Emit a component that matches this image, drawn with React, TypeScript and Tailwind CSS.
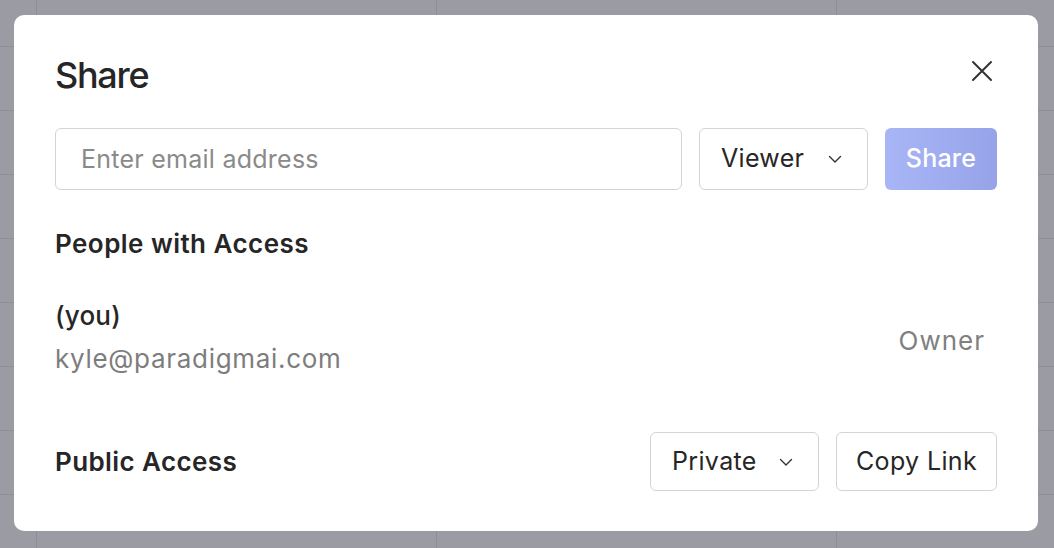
import { useState } from "react";

const ChevronDown = () => (
  <svg width="16" height="16" viewBox="0 0 16 16" fill="none" className="shrink-0">
    <path d="M2.5 5.5L8 11L13.5 5.5" stroke="#333" strokeWidth="1.4" strokeLinecap="round" strokeLinejoin="round" />
  </svg>
);

const CloseIcon = () => (
  <svg width="22" height="22" viewBox="0 0 22 22" fill="none">
    <path d="M2 2L20 20M20 2L2 20" stroke="#333" strokeWidth="2" strokeLinecap="round" />
  </svg>
);

// spreadsheet behind the dialog
const SheetBackground = () => {
  const rows = Array.from({ length: 9 });
  const cols = Array.from({ length: 4 });
  return (
    <div className="absolute inset-0 overflow-hidden bg-[#9b9ca3]">
      <div className="grid grid-cols-[37px_400px_400px_400px] grid-rows-[47px_repeat(8,64px)]">
        {rows.map((_, r) =>
          cols.map((_, c) => (
            <div key={`${r}-${c}`} className="border-r border-b border-[#8d8e96]" />
          ))
        )}
      </div>
    </div>
  );
};

const App = () => {
  const [email, setEmail] = useState("");

  return (
    <div
      className="relative w-[1054px] h-[548px] overflow-hidden"
      style={{ fontFamily: "Inter, 'Noto Sans', sans-serif" }}
    >
      <SheetBackground />

      {/* Dialog */}
      <div className="absolute left-[14px] top-[15px] w-[1024px] h-[516px] bg-white rounded-[10px] px-[41px] pt-[40px] text-[#262626]">
        <div className="flex items-start justify-between">
          <h1 className="text-[36px] leading-[40px] font-medium tracking-[-1.3px]">Share</h1>
          <button className="mt-[5px] mr-[4px]">
            <CloseIcon />
          </button>
        </div>

        {/* invite row */}
        <div className="flex gap-[17px] mt-[33px]">
          <input
            value={email}
            onChange={(e) => setEmail(e.target.value)}
            placeholder="Enter email address"
            className="flex-1 h-[62px] border border-[#d4d4d4] rounded-[6px] px-[25px] text-[25px] tracking-[0.25px] placeholder:text-[#8a8a8a] outline-none"
          />
          <button className="w-[169px] h-[62px] border border-[#d4d4d4] rounded-[6px] pl-[21px] pr-[24px] flex items-center justify-between text-[25px] tracking-[0.3px]">
            <span>Viewer</span>
            <ChevronDown />
          </button>
          <button className="w-[112px] h-[62px] rounded-[6px] bg-gradient-to-r from-[#a8b6f7] to-[#97a3e8] text-white text-[25px] font-medium tracking-[0.2px]">
            Share
          </button>
        </div>

        {/* people */}
        <h2 className="mt-[36px] text-[26px] leading-[36px] font-semibold tracking-[0.45px]">People with Access</h2>
        <div className="mt-[36px] flex items-center justify-between">
          <div className="flex flex-col gap-[7px]">
            <span className="text-[26px] leading-[36px] font-medium tracking-[0.2px]">(you)</span>
            <span className="text-[26px] leading-[36px] text-[#7d7d7d] tracking-[0.7px]">kyle@paradigmai.com</span>
          </div>
          <span className="text-[26px] leading-[36px] text-[#808080] tracking-[1px] pr-[12px] pt-[7px]">Owner</span>
        </div>

        {/* public */}
        <div className="mt-[55px] flex items-center justify-between">
          <h2 className="text-[26px] leading-[36px] font-semibold tracking-[0.4px]">Public Access</h2>
          <div className="flex gap-[17px]">
            <button className="w-[169px] h-[59px] border border-[#d4d4d4] rounded-[6px] pl-[21px] pr-[24px] flex items-center justify-between text-[25px] tracking-[0.35px]">
              <span>Private</span>
              <ChevronDown />
            </button>
            <button className="w-[161px] h-[59px] border border-[#d4d4d4] rounded-[6px] text-[25px] tracking-[0.35px]">
              Copy Link
            </button>
          </div>
        </div>
      </div>
    </div>
  );
};

export default App;
